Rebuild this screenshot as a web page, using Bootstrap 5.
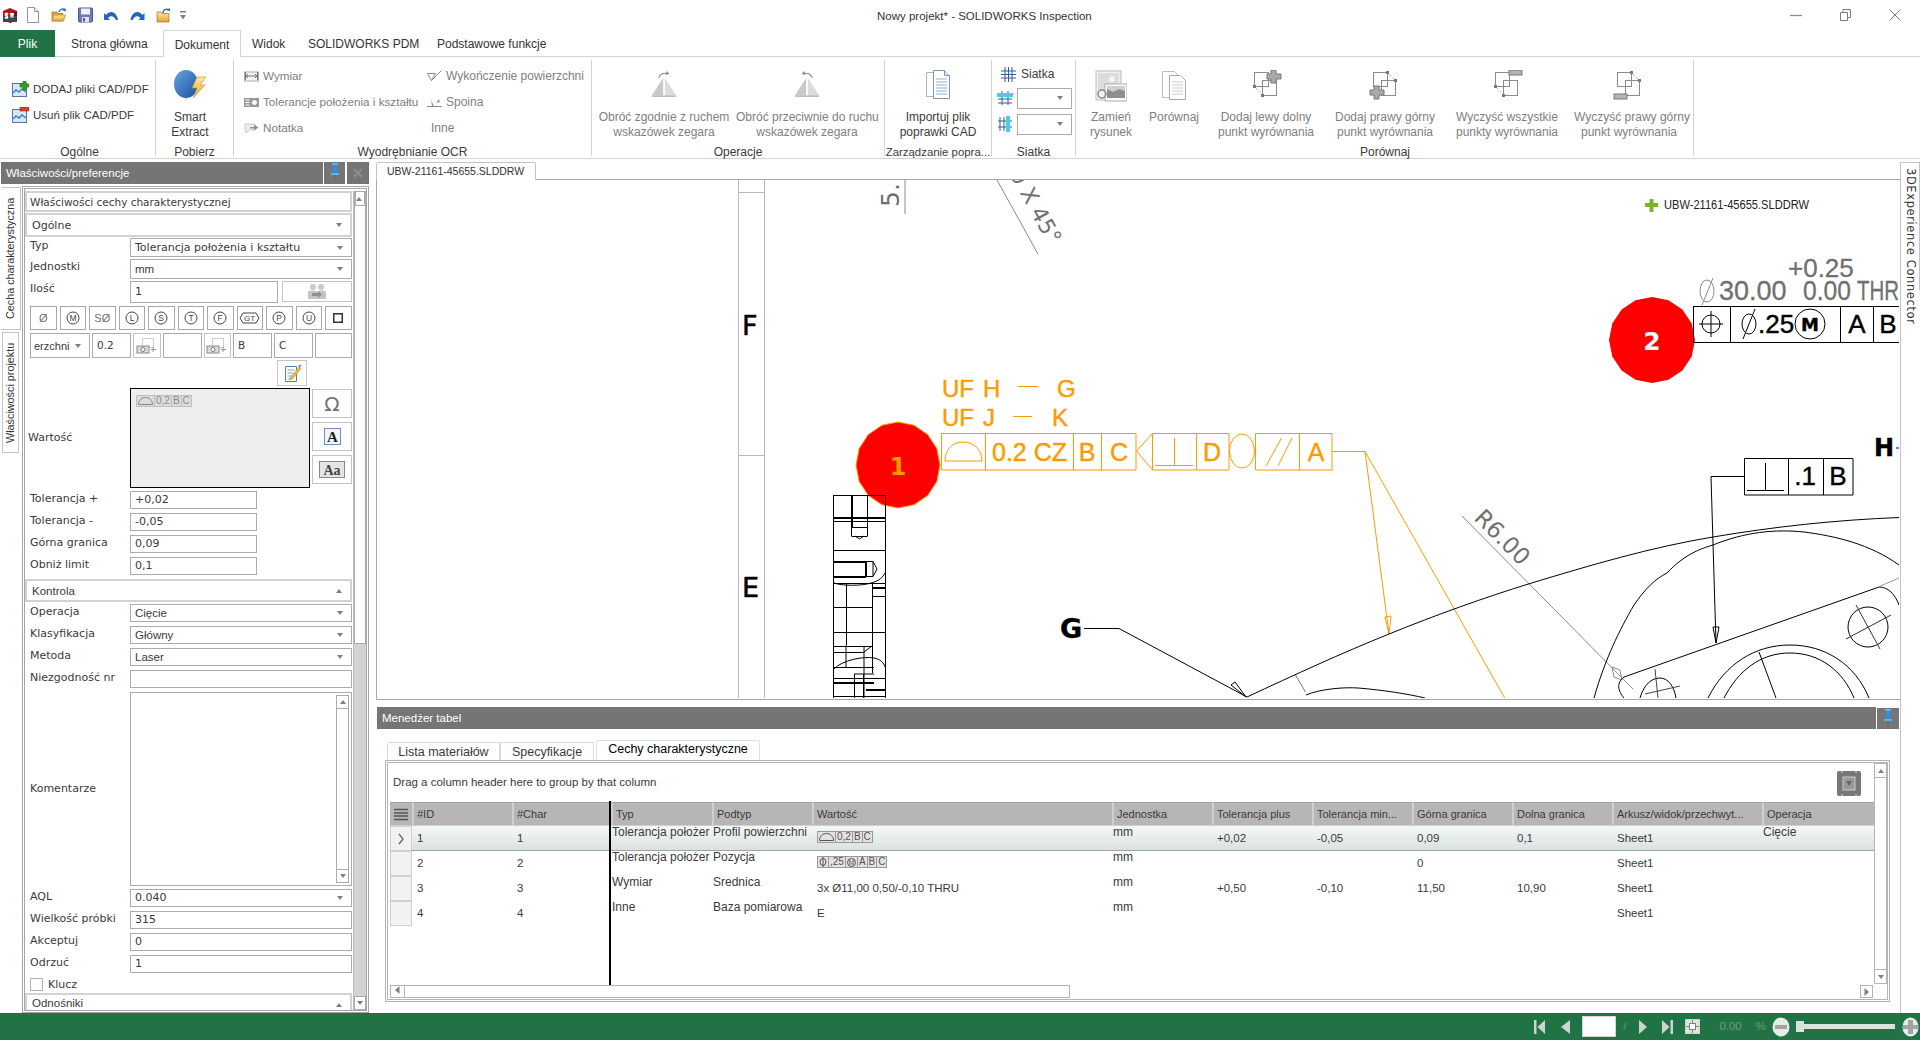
<!DOCTYPE html>
<html lang="pl">
<head>
<meta charset="utf-8">
<title>Nowy projekt* - SOLIDWORKS Inspection</title>
<link href="https://cdn.jsdelivr.net/npm/bootstrap@5.3.0/dist/css/bootstrap.min.css" rel="stylesheet">
<style>
html,body{margin:0;height:1040px;overflow:hidden;background:#fff}
body{font:12px/1.25 "Liberation Sans",Arial,sans-serif;color:#3a3a3a}
svg{display:block;flex:none}
.defs{position:absolute;width:0;height:0}
.appw{width:1920px;height:1040px}
/* title bar */
.ttl{height:30px;flex:none}
.qat{width:200px;flex:none}
.q1{margin-left:2px;width:16px}.q2{margin-left:8px;width:14px}.q3{margin-left:11px;width:16px}.q4{margin-left:11px;width:15px}.q5{margin-left:10px;width:16px}.q6{margin-left:10px;width:17px}.q7{margin-left:10px;width:15px}.q8{margin-left:9px;width:6px}
.ttl-t{margin-left:677px;font-size:11.5px;color:#333;white-space:nowrap;padding-top:2px}
.wb{margin-left:auto;padding-right:19px;gap:38px}
/* ribbon tabs */
.rtabs{height:27px;flex:none;border-bottom:1px solid #d4d4d4;flex-wrap:nowrap}
.rtabs .nav-link{padding:0;border:0;border-radius:0;color:#333;font-size:12px;line-height:28px;height:27px;white-space:nowrap;background:none}
.rtabs .t-plik{width:55px;background:#217346;color:#fff;text-align:center;margin-right:16px}
.rtabs .t-str{width:76px;margin-right:16px}
.rtabs .t-dok{width:78px;border:1px solid #d4d4d4;border-bottom:1px solid #fff;text-align:center;margin-right:11px;background:#fff;color:#333}
.rtabs .t-wid{width:34px;margin-right:22px}
.rtabs .t-pdm{width:101px;margin-right:28px}
/* ribbon */
.rib{height:102px;flex:none;border-bottom:1px solid #d4d4d4;padding:3px 0}
.rg{border-right:1px solid #d4d4d4;height:96px;position:relative;flex:none}
.rg-b{height:84px;flex:none}
.rg-l{height:16px;line-height:16px;text-align:center;white-space:nowrap;overflow:hidden;color:#3a3a3a}
.g1{width:156px}.g2{width:78px}.g3{width:358px}.g4{width:293px}.g5{width:107px}.g6{width:84px}.g7{width:618px;border-right:1px solid #d4d4d4}
.g1 .rg-l{padding-left:4px}
.g5 .rg-l{font-size:11.4px}
.g7 .rg-b{padding-right:8px}
.g7 .rg-l{width:618px}
.rl{height:26px;white-space:nowrap;gap:4px}
.g1 .rg-b{padding:16px 0 0 12px;font-size:11.5px}
.g3 .rg-b{padding:3px 0 0 10px}
.g3c1{width:183px;font-size:11.7px}
.dis{color:#808080}
.lb{height:84px;padding-top:10px;line-height:15px;text-align:center;white-space:nowrap;flex:none}
.lb .ico{height:30px;margin-bottom:10px}
.lb .ico svg{margin:0 auto}
.w144{width:144px}.w142{width:142px}.w107{width:106px}.w78{width:68px}
.w70{width:70px}.w56{width:56px}.w128{width:128px}.w110{width:110px}.w136{width:134px}
.sat{padding:3px 0 0 5px}
.sat1{height:22px;gap:5px}
.sat2{height:26px;gap:4px}
.rcb{width:55px;height:21px;border:1px solid #ababab;position:relative;background:#fff}
.cd{width:0;height:0;border-left:3.5px solid transparent;border-right:3.5px solid transparent;border-top:4px solid #808080;position:absolute;right:8px;top:50%;margin-top:-2px}
.cu{width:0;height:0;border-left:3.5px solid transparent;border-right:3.5px solid transparent;border-bottom:4px solid #808080;position:absolute;right:8px;top:50%;margin-top:-2px}
/* main */
.mainw{height:854px;flex:none}
.lp{width:369px;flex:none;padding-top:3px}
.hdr{background:#757575;color:#fff;height:22px;line-height:23px;font-size:11.5px;padding-left:5px;white-space:nowrap}
.hd-lp{width:322px;margin-left:1px}
.hdbtn{background:#757575;height:22px;width:21px;margin-left:1px;flex:none}
.hdbtn2{margin-left:2px;width:22px}
.lpb{height:829px}
.vts{width:22px;flex:none;padding-top:3px}
.vt{writing-mode:vertical-rl;transform:rotate(180deg);text-align:center;white-space:nowrap;color:#333;font-size:10.8px}
.vt1{height:143px;width:20px;border:1px solid #c4c4c4;border-right:0;margin-left:1px;background:#fff;line-height:18px}
.vt2{height:121px;width:17px;margin:2px 0 0 2px;border:1px solid #c4c4c4;background:#fff;line-height:15px}
.pg{width:347px;height:827px;margin-top:2px;border:3px double #a6a6a6;overflow:hidden;padding:2px 0 0 0}
.pgc{width:327px;flex:none}
.psb{width:14px;margin-left:1px;background:#d3d3d3;position:relative;height:822px;border-left:1px solid #bbb}
.psb-th{height:453px;background:#fff;border:1px solid #ababab;border-top:0}
.psb-up{height:15px;border:1px solid #ababab;background:#fff;position:relative}
.psb .cd,.psb .cu{right:2px}
.psb-dn{position:absolute;bottom:3px;left:0;right:0;height:14px;border:1px solid #ababab;background:#fff}
.pcard{border:2px solid #d2d2d2;background:#fff;font:11px "DejaVu Sans",Verdana,sans-serif;color:#3a3a3a;padding:0 0 0 5px;position:relative;display:flex;align-items:center;white-space:nowrap}
.p-tit{height:21px;padding-left:3px;font-size:10.5px}
.p-ogo{height:24px;margin-top:1px}
.p-kon{height:23px;margin-top:4px;font:11.5px "Liberation Sans",sans-serif}
.p-odn{height:24px;margin-top:2px;font:11.5px "Liberation Sans",sans-serif;padding-bottom:4px}
.pr{display:flex;font:11px "DejaVu Sans",Verdana,sans-serif;color:#3a3a3a}
.pl-t{width:105px;padding-left:5px;flex:none;white-space:nowrap;line-height:16px}
.fld.form-control{border:1px solid #ababab;border-radius:0;padding:0 0 0 4px;font:11px/16px "DejaVu Sans",Verdana,sans-serif;color:#3a3a3a;background:#fff;min-height:0;position:relative;white-space:nowrap;width:222px;flex:none;height:100%;display:flex;align-items:center}
.fld.nar{font-family:"Liberation Sans",sans-serif;font-size:11.5px}
.fld.sh{width:127px}
.r19{height:19px;margin-top:1px}
.r20{height:20px;margin-top:2px}
.r18{height:18px;margin-top:4px}
.r18a{height:18px;margin-top:3px}
.r18b{height:18px;margin-top:2px}
.r22{height:22px;margin-top:2px}
.fld.fil{width:148px}
.btn.sb{border:1px solid #c4c4c4;border-radius:0;background:#fff;padding:0;display:flex;align-items:center;justify-content:center;color:#444;font-size:11px}
.sb-il{width:70px;height:21px;margin-left:4px}
.syms{height:24px;margin-top:3px;padding-left:5px;gap:3px}
.syms .btn.sb{width:26.5px;height:24px;border-color:#a8a8a8}
.fcf{height:25px;margin-top:3px;padding-left:5px;gap:2px}
.fcf .fld.form-control{height:25px;width:39px;padding-left:4px;font-size:10.5px;align-items:flex-start;padding-top:3px}
.fcf .fld.f-sel{width:60px;font:11px "Liberation Sans",sans-serif;align-items:center;padding:0 0 0 3px}
.fcf .fld.f-end{width:37px}
.fcf .btn.sb{width:28px;height:25px}
.edr{height:26px;margin-top:2px;padding-left:252px}
.edr .btn.sb{width:30px;height:26px}
.wrt{height:100px;margin-top:2px}
.wrt .pl-t{padding-left:3px;align-self:center}
.wbox{width:180px;height:100px;border:1px solid #000;background:#eee;padding:6px 5px;flex:none}
.wbtns{padding-left:2px;padding-top:1px}
.wbtns .btn.sb{width:40px;height:29px;margin-bottom:4px}
.kom{height:194px;margin-top:4px}
.kom .pl-t{align-self:center}
.kbox{width:222px;height:194px;border:1px solid #ababab;position:relative}
.ksb{position:absolute;top:2px;right:2px;bottom:2px;width:13px;border:1px solid #ababab}
.ksb i{display:block;height:13px;position:relative}
.ksb i:first-child{border-bottom:1px solid #ababab}
.ksb i:last-child{position:absolute;bottom:0;left:0;right:0;border-top:1px solid #ababab}
.ksb .cd,.ksb .cu{right:2px}
.rkl{height:13px;margin-top:5px;padding-left:5px;gap:5px;align-items:center}
.kcb{width:13px;height:13px;border:1px solid #b4b4b4;background:#fff;flex:none}
.gd{display:inline-flex;height:12px;font:10px/10px "Liberation Sans",sans-serif;color:#555;vertical-align:top}
.gd span{border:1px solid #9a9a9a;border-left-width:0;padding:0 1px;background:#e2e2e2;display:flex;align-items:center;justify-content:center;min-width:9px}
.gd span:first-child{border-left-width:1px}
.gd.dim{color:#8e8e8e}
.gd.dim span{border-color:#c0c0c0;background:#dcdcdc}
/* right */
.rcol{width:1551px;flex:none;padding-top:3px}
.rci{width:1525px;margin-left:7px;border-right:1px solid #c4c4c4;height:851px;flex:none}
.dt.nav-tabs{height:18px;border-bottom:1px solid #a8a8a8;width:1524px;flex-wrap:nowrap}
.dt .nav-link,.dt .nav-link.active{height:19px;width:160px;border:1px solid #c4c4c4;border-bottom:1px solid #fff;border-radius:2px 2px 0 0;font-size:10.5px;line-height:17px;text-align:left;padding:0 0 0 10px;color:#333;margin:0;background:#fff;white-space:nowrap}
.cv{height:520px;width:1524px;border-left:1px solid #a8a8a8;border-bottom:1px solid #a8a8a8;position:relative;overflow:hidden;background:#fff;flex:none}
.cv svg text{font-family:"Liberation Sans",Arial,sans-serif}
.cv svg .dj{font-family:"DejaVu Sans",sans-serif}
.vt3{writing-mode:vertical-rl;font:11.5px "DejaVu Sans",sans-serif;letter-spacing:.6px;color:#333;height:128px;width:19px;border:1px solid #c4c4c4;border-left:0;border-bottom:0;padding-top:5px;white-space:nowrap;line-height:17px;overflow:visible}
.tm-h{margin:7px 0 0 1px;height:23px;flex:none}
.tm-hb{width:1499px}
.tm-pin{width:22px;height:21px;margin:1px 0 0 1px;background:#757575;flex:none}
.tt.nav-tabs{margin:10px 0 0 11px;height:20px;border-bottom:0;flex-wrap:nowrap;align-items:flex-end;position:relative;z-index:1}
.tt .nav-link{padding:0;border:1px solid #d8d8d8;border-bottom:0;border-radius:2px 2px 0 0;margin:0;color:#3a3a3a;font-size:12.5px;height:18px;line-height:18px;text-align:center;background:#fff;white-space:nowrap}
.tt .l1{width:113px}
.tt .l2{width:94px;margin-right:2px}
.tt .l3{width:164px;height:20px;line-height:17px;color:#3a3a3a}
.tpn{margin-left:9px;width:1505px;height:242px;border:3px double #b4b4b4;flex:none}
.tpc{width:1486px;flex:none;height:236px;position:relative}
.drag{height:39px;padding-left:5px;position:relative;flex:none;font-size:11.5px}
.dragi{position:absolute;right:12px;top:7px}
.tg{table-layout:fixed;width:1484px;margin:0 0 0 2px;font-size:11.5px;color:#3a3a3a;border-collapse:separate;border-spacing:0}
.tg .c0{width:22px}.tg .c1{width:100px}.tg .c2{width:99px}.tg .c3{width:101px}.tg .c4{width:100px}.tg .c5{width:300px}.tg .c6{width:100px}.tg .c7{width:100px}.tg .c8{width:100px}.tg .c9{width:100px}.tg .c10{width:100px}.tg .c11{width:150px}.tg .c12{width:112px}
.tgw{height:183px;flex:none}
.tg th,.tg td{padding:0;border:0;box-shadow:none;overflow:hidden;white-space:nowrap;background:none;font-weight:400;color:#3a3a3a}
.tg thead th{height:24px;background:#b6b6b6;border-top:1px solid #a0a0a0;border-left:2px solid #cfcfcf;border-bottom:1px solid #cfcfcf;padding:2px 0 0 3px;vertical-align:middle;font-size:11px}
.tg thead th:first-child{border-left:0;text-align:center;padding:0}
.tg tbody td{height:25px;vertical-align:middle;padding-left:5px}
.tg tbody td.tp{vertical-align:top;padding:0 0 0 1px;line-height:13px;font-size:12px}
.tg tbody td.rh{background:#f2f2f2;border:1px solid #d0d0d0;padding:0;text-align:center;color:#555}
.tg tbody tr.sel td{background:linear-gradient(#f4f9f7,#dae1df);border-bottom:1px solid #9aa5a1}
.tg tbody tr.sel td.rh{background:#f2f2f2;border:1px solid #d0d0d0}
.hsb{height:13px;flex:none;position:relative;margin-left:2px}
.hsb-t{width:680px;height:13px;border:1px solid #b4b4b4;position:relative}
.hsb-a{width:14px;height:11px;border-right:1px solid #b4b4b4}
.hsb-r{position:absolute;right:1px;top:0;width:13px;height:13px;border:1px solid #b4b4b4}
.vsb{width:13px;height:221px;border:1px solid #b4b4b4;position:relative;flex:none}
.vsb i{display:block;height:14px;position:relative}
.vsb i:first-child{border-bottom:1px solid #b4b4b4}
.vsb i:last-child{position:absolute;left:0;right:0;bottom:0;border-top:1px solid #b4b4b4}
.vsb .cd,.vsb .cu{right:2px;border-left-width:3px;border-right-width:3px}
.fz{position:absolute;left:221px;top:38px;width:2px;height:184px;background:#000}
/* status */
.stb{height:27px;flex:none;background:#217346;color:#9db5a8;justify-content:flex-end;padding-right:1px}
.stb .m1{margin-left:16px}.stb .m2{margin-left:12px}.stb .m3{margin-left:7px}.stb .m4{margin-left:13px}.stb .m5{margin-left:15px}.stb .m6{margin-left:12px}.stb .m7{margin-left:19px}.stb .m8{margin-left:14px}.stb .m9{margin-left:6px}.stb .m10{margin-left:7px}
.stin{width:34px;height:21px;background:#fff;border:1px solid #cfd8d3}
.st-txt{font-size:11.5px;color:#6f9783}
.zs{width:99px;height:5px;background:#d9e2dd;position:relative;margin-left:6px}
.zs i{position:absolute;left:0;top:-3px;width:8px;height:11px;background:#d9e2dd}
</style>
</head>
<body>
<svg class="defs" aria-hidden="true">
<defs>
<linearGradient id="gb" x1="0" y1="0" x2="1" y2="1"><stop offset="0" stop-color="#6aa5e2"/><stop offset="1" stop-color="#174f9c"/></linearGradient>
<linearGradient id="gy" x1="0" y1="0" x2="0" y2="1"><stop offset="0" stop-color="#ffe89a"/><stop offset="1" stop-color="#e0a23c"/></linearGradient>
<symbol id="pin" viewBox="0 0 14 20"><rect x="4" y="1" width="6" height="2" fill="#5cb4f0"/><rect x="5" y="3" width="4" height="8" fill="#2f8fe0"/><rect x="3" y="11" width="8" height="2" fill="#5cb4f0"/><rect x="6.500" y="13" width="1" height="6" fill="#5a6b78"/></symbol>
<symbol id="pic" viewBox="0 0 16 14"><rect x=".5" y=".5" width="14" height="13" fill="#d6e8f8" stroke="#56789e"/><path d="M1 10l3-3 3 2 3-3 4 3" fill="none" stroke="#2e86d0" stroke-width="1.400"/></symbol>
<symbol id="al" viewBox="0 0 32 32"><g fill="none" stroke="#8c8c8c"><rect x="4.500" y="2.500" width="14" height="14"/><rect x="12.500" y="10.500" width="14" height="15"/></g></symbol>
<symbol id="cam" viewBox="0 0 22 18"><rect x="6.500" y="1.500" width="11" height="9" fill="none" stroke="#999" stroke-dasharray="1 1"/><rect x="1" y="9" width="12" height="7" fill="#ddd" stroke="#888"/><circle cx="7" cy="12.500" r="2" fill="#fff" stroke="#777"/><path d="M17 10v5M15 12.500h5" stroke="#999"/></symbol>
<symbol id="tri" viewBox="0 0 32 26"><path d="M15 3v20H2z" fill="#c9c9c9"/><path d="M17 3v20h13z" fill="#dcdcdc"/><path d="M2 23h28v1.500H2z" fill="#aaa"/></symbol>
<symbol id="doc2" viewBox="0 0 30 32"><path d="M3.500 1.500h12l4 4v22h-16z" fill="#fff" stroke="#bdbdbd"/><path d="M10.500 5.500h11l5 5v19h-16z" fill="#fff" stroke="#a8a8a8"/><path d="M13 12h11M13 15h11M13 18h11M13 21h11M13 24h11" stroke="#cfcfcf"/></symbol>
</defs>
</svg>
<div class="appw d-flex flex-column">

<div class="ttl d-flex align-items-center">
 <div class="qat d-flex align-items-center">
  <svg class="q1" height="16" viewBox="0 0 16 16"><path d="M1 4l7-3 7 3v9l-7 3-7-3z" fill="#b01818"/><path d="M8 7l7-3v9l-7 3z" fill="#6e0d0d"/><rect x="1" y="9" width="14" height="6" fill="#444"/><path d="M3 6h3v1.500H4.500v1H6v3H3v-1.500h1.500v-1H3zM8 6l1 5 1-3 1 3 1-5" fill="#fff" stroke="#fff" stroke-width=".4"/></svg>
  <svg class="q2" height="16" viewBox="0 0 14 16"><path d="M1.500.5h7l4 4v11h-11z" fill="#fff" stroke="#8a93b8"/><path d="M8.500.5v4h4" fill="#e4e9f6" stroke="#8a93b8"/></svg>
  <svg class="q3" height="16" viewBox="0 0 16 16"><path d="M1 5h5l1 1.500h5V14H1z" fill="#d9a73e" stroke="#9a7428" stroke-width=".7"/><path d="M2.500 8h12l-2 6H1z" fill="url(#gy)" stroke="#b08a33" stroke-width=".7"/><path d="M8 5c1-3 4-4 6-2" fill="none" stroke="#2d6fc0" stroke-width="1.500"/><path d="M15.500 4.500L14 1l-2.500 2.500z" fill="#2d6fc0"/></svg>
  <svg class="q4" height="16" viewBox="0 0 15 16"><rect x=".5" y="1" width="14" height="14" rx="1" fill="#6e7ab0" stroke="#4e5a90"/><rect x="3" y="1.500" width="9" height="6" fill="#eef0f8"/><rect x="4" y="10" width="7" height="5" fill="#e6e6e6"/><rect x="5" y="11" width="2" height="3.500" fill="#4e5a90"/></svg>
  <svg class="q5" height="11" viewBox="0 0 16 11"><path d="M1 3v7h6L5 8c3-3 6-2 8 2h2C14 3 8-1 3 5z" fill="#2067b8"/></svg>
  <svg class="q6" height="11" viewBox="0 0 16 11"><path d="M15 3v7H9l2-2C8 5 5 6 3 10H1C2 3 8-1 13 5z" fill="#2067b8"/></svg>
  <svg class="q7" height="16" viewBox="0 0 15 16"><path d="M1 5h4l1 1.500h7V15H1z" fill="url(#gy)" stroke="#9a7428" stroke-width=".7"/><path d="M7 6c0-3 3-5 6-3" fill="none" stroke="#2d6fc0" stroke-width="1.500"/><path d="M14.500 4.500L13.500 1l-3 2z" fill="#2d6fc0"/></svg>
  <svg class="q8" height="9" viewBox="0 0 6 9"><path d="M0 0h6v1.500H0z" fill="#808080"/><path d="M0 4h6L3 8.500z" fill="#808080"/></svg>
 </div>
 <div class="ttl-t">Nowy projekt* - SOLIDWORKS Inspection</div>
 <div class="wb d-flex align-items-center">
  <svg width="12" height="12" viewBox="0 0 12 12"><path d="M0 6.500h12" stroke="#8a8a8a" stroke-width="1.300"/></svg>
  <svg width="11" height="12" viewBox="0 0 11 12"><path d="M.5 3.500h7v8h-7zM3 3.500V.5h7.500v8H7.500" fill="none" stroke="#7a7a7a"/></svg>
  <svg width="12" height="12" viewBox="0 0 12 12"><path d="M.5.500l11 11M11.500.500l-11 11" stroke="#7a7a7a"/></svg>
 </div>
</div>

<ul class="nav rtabs">
 <li class="nav-item"><a class="nav-link t-plik" href="#">Plik</a></li>
 <li class="nav-item"><a class="nav-link t-str" href="#">Strona główna</a></li>
 <li class="nav-item"><a class="nav-link t-dok active" href="#">Dokument</a></li>
 <li class="nav-item"><a class="nav-link t-wid" href="#">Widok</a></li>
 <li class="nav-item"><a class="nav-link t-pdm" href="#">SOLIDWORKS PDM</a></li>
 <li class="nav-item"><a class="nav-link" href="#">Podstawowe funkcje</a></li>
</ul>

<div class="rib d-flex">
 <div class="rg g1">
  <div class="rg-b">
   <div class="rl d-flex align-items-center"><svg width="17" height="16" viewBox="0 0 17 16"><use href="#pic" y="2" width="16" height="14"/><path d="M11 0h3v3h3v3h-3v3h-3V6H8V3h3z" fill="#33a02c" stroke="#1d6e1a" stroke-width=".6"/></svg><span>DODAJ pliki CAD/PDF</span></div>
   <div class="rl d-flex align-items-center"><svg width="17" height="16" viewBox="0 0 17 16"><use href="#pic" y="2" width="16" height="14"/><rect x="8" y="0" width="9" height="4" fill="#e33a2c" stroke="#a3231a" stroke-width=".6"/></svg><span>Usuń plik CAD/PDF</span></div>
  </div>
  <div class="rg-l">Ogólne</div>
 </div>
 <div class="rg g2">
  <div class="rg-b"><div class="lb w78">
   <div class="ico"><svg width="33" height="30" viewBox="0 0 33 30"><ellipse cx="12" cy="14" rx="12" ry="14" fill="url(#gb)"/><path d="M12 28v2" stroke="#aaa"/><path d="M23 7h9l-6 8h5L19 28l4-10h-5z" fill="url(#gy)" stroke="#c88a20" stroke-width=".6"/></svg></div>
   <div>Smart<br>Extract</div></div></div>
  <div class="rg-l">Pobierz</div>
 </div>
 <div class="rg g3">
  <div class="rg-b d-flex">
   <div class="g3c1 dis">
    <div class="rl d-flex align-items-center"><svg width="15" height="11" viewBox="0 0 15 11"><rect x=".5" y="1" width="14" height="9" fill="#f4f4f4" stroke="#aaa"/><path d="M1.500 1v8M13.500 1v8M2 5h11M2 5l2-2M2 5l2 2M13 5l-2-2M13 5l-2 2" stroke="#777" fill="none"/></svg><span>Wymiar</span></div>
    <div class="rl d-flex align-items-center"><svg width="15" height="9" viewBox="0 0 15 9"><rect width="15" height="9" fill="#9a9a9a"/><path d="M1.500 2h4M1.500 4.500h4M1.500 7h4" stroke="#fff"/><circle cx="10.500" cy="4.500" r="2" fill="#fff" stroke="#fff"/></svg><span>Tolerancje położenia i kształtu</span></div>
    <div class="rl d-flex align-items-center"><svg width="15" height="13" viewBox="0 0 15 13"><path d="M1 2h10v6H5l-3 3V8H1z" fill="#eee" stroke="#ccc"/><path d="M6 5h4V2.500L14.500 5.500 10 8.500V6.500H6z" fill="#909090"/></svg><span>Notatka</span></div>
   </div>
   <div class="dis">
    <div class="rl d-flex align-items-center"><svg width="15" height="12" viewBox="0 0 15 12"><path d="M.5 3.500h8L4.500 10.500z M4.500 10.500L14.500.5" fill="none" stroke="#8a8a8a"/></svg><span>Wykończenie powierzchni</span></div>
    <div class="rl d-flex align-items-center"><svg width="15" height="11" viewBox="0 0 15 11"><path d="M0 9.500h15" stroke="#888"/><path d="M5 9l-1-6 3 6zM9 6l3-4 1 3z" fill="#999"/></svg><span>Spoina</span></div>
    <div class="rl d-flex align-items-center"><span class="ms-1">Inne</span></div>
   </div>
  </div>
  <div class="rg-l">Wyodrębnianie OCR</div>
 </div>
 <div class="rg g4">
  <div class="rg-b d-flex">
   <div class="lb w144 dis"><div class="ico"><svg width="32" height="28" viewBox="0 0 32 32"><use href="#tri" y="6" width="32" height="26"/><path d="M10 9c1-4 5-6 9-5" fill="none" stroke="#888" stroke-width="1.200"/><path d="M19 1l3 3-4 2z" fill="#888"/></svg></div><div>Obróć zgodnie z ruchem<br>wskazówek zegara</div></div>
   <div class="lb w142 dis"><div class="ico"><svg width="32" height="28" viewBox="0 0 32 32"><use href="#tri" y="6" width="32" height="26"/><path d="M22 9c-1-4-5-6-9-5" fill="none" stroke="#888" stroke-width="1.200"/><path d="M13 1l-3 3 4 2z" fill="#888"/></svg></div><div>Obróć przeciwnie do ruchu<br>wskazówek zegara</div></div>
  </div>
  <div class="rg-l">Operacje</div>
 </div>
 <div class="rg g5">
  <div class="rg-b"><div class="lb w107"><div class="ico"><svg width="28" height="31" viewBox="0 0 28 31"><path d="M2.500 2.500h11l4 4v20h-15z" fill="#fff" stroke="#a9b5c6"/><path d="M9.500 .5h11l5 5v23h-16z" fill="#fff" stroke="#7f94b1"/><path d="M20.500 .5v5h5" fill="#dfe9f6" stroke="#7f94b1"/><path d="M12 9h11M12 12h11M12 15h11M12 18h11M12 21h11M12 24h11" stroke="#8eb0d8"/></svg></div><div>Importuj plik<br>poprawki CAD</div></div></div>
  <div class="rg-l">Zarządzanie popra...</div>
 </div>
 <div class="rg g6">
  <div class="rg-b sat">
   <div class="sat1 d-flex align-items-center ps-1"><svg width="15" height="15" viewBox="0 0 15 15"><path d="M4 0v15M7.500 0v15M11 0v15M0 4h15M0 7.500h15M0 11h15" stroke="#2f5f94"/></svg><span>Siatka</span></div>
   <div class="sat2 d-flex align-items-center"><svg width="16" height="16" viewBox="0 0 16 16"><path d="M5 1v14M11 1v14M1 9h14M1 13h14" stroke="#2f5f94"/><rect y="3" width="16" height="4" fill="#45d0e8"/></svg><div class="rcb"><span class="cd"></span></div></div>
   <div class="sat2 d-flex align-items-center"><svg width="16" height="16" viewBox="0 0 16 16"><path d="M3 1v14M7 1v14M1 5h14M1 11h14" stroke="#2f5f94"/><rect x="9" width="4" height="16" fill="#45d0e8"/></svg><div class="rcb"><span class="cd"></span></div></div>
  </div>
  <div class="rg-l">Siatka</div>
 </div>
 <div class="rg g7">
  <div class="rg-b d-flex">
   <div class="lb w70 dis"><div class="ico"><svg width="32" height="32" viewBox="0 0 32 32"><rect x="1" y="1" width="25" height="29" fill="#f0f0f0" stroke="#bbb"/><rect x="3" y="3" width="21" height="17" fill="#dcdcdc"/><circle cx="17" cy="9" r="3" fill="#f4f4f4"/><rect x="10" y="14" width="22" height="17" fill="#fff" stroke="#aaa"/><rect x="12" y="16" width="18" height="12" fill="#8f8f8f"/><path d="M12 16h18v5l-6-2-6 3-6-3z" fill="#cfcfcf"/><circle cx="7" cy="24" r="4" fill="none" stroke="#888" stroke-width="1.500"/></svg></div><div>Zamień<br>rysunek</div></div>
   <div class="lb w56 dis"><div class="ico"><svg width="30" height="32" viewBox="0 0 30 32"><use href="#doc2" width="30" height="32"/></svg></div><div>Porównaj</div></div>
   <div class="lb w128 dis"><div class="ico"><svg width="32" height="30" viewBox="0 0 32 30"><use href="#al" width="32" height="32"/><path d="M4.500 16.500l8 9" stroke="#999" stroke-dasharray="1 1"/><rect x="3" y="15" width="3" height="3" fill="#777"/><rect x="11" y="24" width="3" height="3" fill="#777"/><path d="M21 0h5v4h5v5h-5v4h-5V9h-4V4h4z" fill="#aaa" stroke="#777"/></svg></div><div>Dodaj lewy dolny<br>punkt wyrównania</div></div>
   <div class="lb w110 dis"><div class="ico"><svg width="32" height="30" viewBox="0 0 32 30"><use href="#al" width="32" height="32"/><path d="M18.500 2.500l8 8" stroke="#999" stroke-dasharray="1 1"/><rect x="17" y="1" width="3" height="3" fill="#777"/><rect x="25" y="9" width="3" height="3" fill="#777"/><path d="M5 16h5v4h5v5h-5v4H5v-4H1v-5h4z" fill="#aaa" stroke="#777"/></svg></div><div>Dodaj prawy górny<br>punkt wyrównania</div></div>
   <div class="lb w136 dis"><div class="ico"><svg width="32" height="30" viewBox="0 0 32 30"><use href="#al" width="32" height="32"/><path d="M4.500 16.500l8 9" stroke="#999" stroke-dasharray="1 1"/><rect x="3" y="15" width="3" height="3" fill="#777"/><rect x="11" y="24" width="3" height="3" fill="#777"/><rect x="18" y="0" width="13" height="5" fill="#b4b4b4" stroke="#777"/></svg></div><div>Wyczyść wszystkie<br>punkty wyrównania</div></div>
   <div class="lb w110 dis"><div class="ico"><svg width="32" height="30" viewBox="0 0 32 30"><use href="#al" width="32" height="32"/><path d="M18.500 2.500l8 8" stroke="#999" stroke-dasharray="1 1"/><rect x="17" y="1" width="3" height="3" fill="#777"/><rect x="25" y="9" width="3" height="3" fill="#777"/><rect x="1" y="24" width="13" height="5" fill="#b4b4b4" stroke="#777"/></svg></div><div>Wyczyść prawy górny<br>punkt wyrównania</div></div>
  </div>
  <div class="rg-l">Porównaj</div>
 </div>
</div>

<div class="mainw d-flex">
 <!-- left panel -->
 <div class="lp d-flex flex-column">
  <div class="d-flex">
   <div class="hdr hd-lp">Właściwości/preferencje</div>
   <div class="hdbtn d-flex justify-content-center"><svg width="14" height="20"><use href="#pin"/></svg></div>
   <div class="hdbtn hdbtn2 d-flex justify-content-center align-items-center"><svg width="10" height="10" viewBox="0 0 10 10"><path d="M1 1l8 8M9 1l-8 8" stroke="#8f8f8f" stroke-width="2"/></svg></div>
  </div>
  <div class="lpb d-flex">
   <div class="vts">
    <div class="vt vt1">Cecha charakterystyczna</div>
    <div class="vt vt2">Właściwości projektu</div>
   </div>
   <div class="pg d-flex">
    <div class="pgc">
     <div class="pcard p-tit">Właściwości cechy charakterystycznej</div>
     <div class="pcard p-ogo">Ogólne<span class="cd"></span></div>
     <div class="pr r19"><div class="pl-t">Typ</div><div class="fld form-control">Tolerancja położenia i kształtu<span class="cd"></span></div></div>
     <div class="pr r20"><div class="pl-t">Jednostki</div><div class="fld form-control nar">mm<span class="cd"></span></div></div>
     <div class="pr r22"><div class="pl-t">Ilość</div><div class="fld fil form-control">1</div><button type="button" class="btn sb sb-il"><svg width="20" height="15" viewBox="0 0 20 15"><circle cx="6" cy="3" r="3" fill="#c9c9c9"/><circle cx="14" cy="3" r="3" fill="#c9c9c9"/><path d="M1 15V8c0-2 9-2 9 0v7zM10 15V8c0-2 9-2 9 0v7z" fill="#c4c4c4"/><path d="M5 9h6V7l4 3.500-4 3.500v-2H5z" fill="#8f8f8f"/></svg></button></div>
     <div class="syms d-flex">
      <button type="button" class="btn sb"><span class="text-secondary">Ø</span></button>
      <button type="button" class="btn sb"><svg width="14" height="14" viewBox="0 0 14 14"><circle cx="7" cy="7" r="6" fill="none" stroke="#444"/><text x="7" y="10" font-size="8.500" text-anchor="middle" fill="#444" font-family="Liberation Sans">M</text></svg></button>
      <button type="button" class="btn sb"><span class="text-secondary">SØ</span></button>
      <button type="button" class="btn sb"><svg width="14" height="14" viewBox="0 0 14 14"><circle cx="7" cy="7" r="6" fill="none" stroke="#444"/><text x="7" y="10" font-size="8.500" text-anchor="middle" fill="#444" font-family="Liberation Sans">L</text></svg></button>
      <button type="button" class="btn sb"><svg width="14" height="14" viewBox="0 0 14 14"><circle cx="7" cy="7" r="6" fill="none" stroke="#444"/><text x="7" y="10" font-size="8.500" text-anchor="middle" fill="#444" font-family="Liberation Sans">S</text></svg></button>
      <button type="button" class="btn sb"><svg width="14" height="14" viewBox="0 0 14 14"><circle cx="7" cy="7" r="6" fill="none" stroke="#444"/><text x="7" y="10" font-size="8.500" text-anchor="middle" fill="#444" font-family="Liberation Sans">T</text></svg></button>
      <button type="button" class="btn sb"><svg width="14" height="14" viewBox="0 0 14 14"><circle cx="7" cy="7" r="6" fill="none" stroke="#444"/><text x="7" y="10" font-size="8.500" text-anchor="middle" fill="#444" font-family="Liberation Sans">F</text></svg></button>
      <button type="button" class="btn sb"><svg width="21" height="12" viewBox="0 0 21 12"><path d="M1 6l3-5h13l3 5-3 5H4z" fill="none" stroke="#444"/><text x="10.500" y="9" font-size="8" text-anchor="middle" fill="#444" font-family="Liberation Sans">GT</text></svg></button>
      <button type="button" class="btn sb"><svg width="14" height="14" viewBox="0 0 14 14"><circle cx="7" cy="7" r="6" fill="none" stroke="#444"/><text x="7" y="10" font-size="8.500" text-anchor="middle" fill="#444" font-family="Liberation Sans">P</text></svg></button>
      <button type="button" class="btn sb"><svg width="14" height="14" viewBox="0 0 14 14"><circle cx="7" cy="7" r="6" fill="none" stroke="#444"/><text x="7" y="10" font-size="8.500" text-anchor="middle" fill="#444" font-family="Liberation Sans">U</text></svg></button>
      <button type="button" class="btn sb"><svg width="10" height="10" viewBox="0 0 10 10"><rect x=".75" y=".75" width="8.500" height="8.500" fill="none" stroke="#333" stroke-width="1.500"/></svg></button>
     </div>
     <div class="fcf d-flex">
      <div class="fld f-sel form-control">erzchni<span class="cd"></span></div>
      <div class="fld form-control">0.2</div>
      <button type="button" class="btn sb"><svg width="22" height="18"><use href="#cam"/></svg></button>
      <div class="fld form-control"></div>
      <button type="button" class="btn sb"><svg width="22" height="18"><use href="#cam"/></svg></button>
      <div class="fld form-control">B</div>
      <div class="fld form-control">C</div>
      <div class="fld f-end form-control"></div>
     </div>
     <div class="edr d-flex"><button type="button" class="btn sb"><svg width="17" height="18" viewBox="0 0 17 18"><path d="M1.500 2.500h11v15h-11z" fill="#fff" stroke="#5b7fa8"/><path d="M3.500 6h7M3.500 9h6M3.500 12h5M3.500 15h4" stroke="#7f9fc4"/><path d="M7 13l8-10 2 1.500-8 10-3 1z" fill="#f5b942" stroke="#b5761c" stroke-width=".5"/><path d="M14.500 2l1.500-1.500 1 1L15.800 3.500z" fill="#e23a2c"/></svg></button></div>
     <div class="pr wrt">
      <div class="pl-t">Wartość</div>
      <div class="wbox"><span class="gd dim"><span><svg width="15" height="8" viewBox="0 0 15 8"><path d="M.5 7.500C.5 3 4 .5 7.500 .5s7 2.500 7 7z" fill="none" stroke="#888"/></svg></span><span>0,2</span><span>B</span><span>C</span></span></div>
      <div class="wbtns">
       <button type="button" class="btn sb"><span class="fs-5 text-secondary">Ω</span></button>
       <button type="button" class="btn sb"><svg width="17" height="17" viewBox="0 0 17 17"><rect x=".5" y=".5" width="16" height="16" fill="#f3f7fb" stroke="#6c8ebf"/><text x="8.500" y="14" font-family="Liberation Serif" font-weight="700" font-size="15" text-anchor="middle" fill="#222">A</text></svg></button>
       <button type="button" class="btn sb"><svg width="26" height="17" viewBox="0 0 26 17"><rect x=".5" y=".5" width="25" height="16" fill="#e4e4e4" stroke="#888"/><text x="13" y="14" font-family="Liberation Serif" font-weight="700" font-size="14" text-anchor="middle" fill="#444">Aa</text></svg></button>
      </div>
     </div>
     <div class="pr r18a"><div class="pl-t">Tolerancja +</div><div class="fld sh form-control">+0,02</div></div>
     <div class="pr r18"><div class="pl-t">Tolerancja -</div><div class="fld sh form-control">-0,05</div></div>
     <div class="pr r18"><div class="pl-t">Górna granica</div><div class="fld sh form-control">0,09</div></div>
     <div class="pr r18"><div class="pl-t">Obniż limit</div><div class="fld sh form-control">0,1</div></div>
     <div class="pcard p-kon">Kontrola<span class="cu"></span></div>
     <div class="pr r18b"><div class="pl-t">Operacja</div><div class="fld nar form-control">Cięcie<span class="cd"></span></div></div>
     <div class="pr r18"><div class="pl-t">Klasyfikacja</div><div class="fld nar form-control">Główny<span class="cd"></span></div></div>
     <div class="pr r18"><div class="pl-t">Metoda</div><div class="fld nar form-control">Laser<span class="cd"></span></div></div>
     <div class="pr r18"><div class="pl-t">Niezgodność nr</div><div class="fld form-control"></div></div>
     <div class="pr kom"><div class="pl-t">Komentarze</div><div class="kbox"><div class="ksb"><i><span class="cu"></span></i><i><span class="cd"></span></i></div></div></div>
     <div class="pr r18a"><div class="pl-t">AQL</div><div class="fld form-control">0.040<span class="cd"></span></div></div>
     <div class="pr r18"><div class="pl-t">Wielkość próbki</div><div class="fld form-control">315</div></div>
     <div class="pr r18"><div class="pl-t">Akceptuj</div><div class="fld form-control">0</div></div>
     <div class="pr r18"><div class="pl-t">Odrzuć</div><div class="fld form-control">1</div></div>
     <div class="pr rkl"><div class="kcb"></div><span>Klucz</span></div>
     <div class="pcard p-odn">Odnośniki<span class="cu"></span></div>
    </div>
    <div class="psb"><div class="psb-th"><div class="psb-up"><span class="cu"></span></div></div><div class="psb-dn"><span class="cd"></span></div></div>
   </div>
  </div>
 </div>

 <!-- right column -->
 <div class="rcol d-flex">
  <div class="rci d-flex flex-column">
   <ul class="nav nav-tabs dt"><li class="nav-item"><a class="nav-link active" href="#">UBW-21161-45655.SLDDRW</a></li></ul>
   <div class="cv">
    <svg width="1523" height="519" viewBox="377 181 1523 519" fill="none">
     <defs><clipPath id="dcl"><rect x="377" y="181" width="1522" height="518"/></clipPath></defs>
     <g clip-path="url(#dcl)">
      <!-- zone strip -->
      <g stroke="#b8b8b8"><path d="M738.500 181v518M764.500 181v518M738 193.500h27M738 456.500h27"/></g>
      <text class="dj" x="742" y="336" font-size="27" fill="#000" stroke="#000" stroke-width=".5">F</text>
      <text class="dj" x="742" y="598" font-size="27" fill="#000" stroke="#000" stroke-width=".5">E</text>
      <!-- dims -->
      <text class="dj" transform="translate(899,208) rotate(-90)" font-size="25" fill="#707070">5.</text>
      <path d="M905 181v34" stroke="#8a8a8a"/>
      <path d="M997 181l41 74" stroke="#8a8a8a"/>
      <text class="dj" transform="translate(1049,247) rotate(61)" font-size="22" fill="#707070" text-anchor="end">0 X 45°</text>
      <path d="M1462 517l171 173" stroke="#8a8a8a"/>
      <path d="M1612 668l8 3 2 10-8-3z" stroke="#8a8a8a"/>
      <text class="dj" transform="translate(1473,520) rotate(45)" font-size="23" fill="#707070">R6.00</text>
      <text x="1788" y="278" font-size="26" fill="#707070" stroke="#707070" stroke-width=".3">+0.25</text>
      <text x="1719" y="301" font-size="27" fill="#707070" stroke="#707070" stroke-width=".3">30.00</text>
      <text x="1803" y="301" font-size="27" fill="#707070" stroke="#707070" stroke-width=".3" textLength="48" lengthAdjust="spacingAndGlyphs">0.00</text>
      <text x="1857" y="301" font-size="27" fill="#707070" stroke="#707070" stroke-width=".3" textLength="42" lengthAdjust="spacingAndGlyphs">THR</text>
      <g stroke="#8a8a8a"><ellipse cx="1707" cy="292" rx="7" ry="11"/><path d="M1702 306l11-27"/></g>
      <!-- legend -->
      <path d="M1649.500 200h4v4h4.500v4h-4.500v5h-4v-5h-4.500v-4h4.500z" fill="#7ab32c"/>
      <text x="1664" y="210" font-size="12" fill="#222" textLength="145" lengthAdjust="spacingAndGlyphs">UBW-21161-45655.SLDDRW</text>
      <!-- balloons -->
      <polygon points="940,466 936.8,482.5 927.7,496.4 914.1,505.7 898,509 881.9,505.7 868.3,496.4 859.2,482.5 856,466 859.2,449.5 868.3,435.6 881.9,426.3 898,423 914.1,426.3 927.7,435.6 936.8,449.5" fill="#f00" stroke="#ff9900"/>
      <text class="dj" x="898" y="476" font-size="24" font-weight="700" fill="#ff9900" text-anchor="middle">1</text>
      <polygon points="1695,341 1691.7,357.5 1682.4,371.4 1668.5,380.7 1652,384 1635.5,380.7 1621.6,371.4 1612.3,357.5 1609,341 1612.3,324.5 1621.6,310.6 1635.5,301.3 1652,298 1668.5,301.3 1682.4,310.6 1691.7,324.5" fill="#f00"/>
      <text class="dj" x="1652" y="351" font-size="25" font-weight="700" fill="#fff" text-anchor="middle">2</text>
      <!-- part section -->
      <g stroke="#000">
       <rect x="833.500" y="496.500" width="52" height="210"/>
       <path d="M834 518.500h52M834 519.500h52M834 522.500h52M834 551.500h52M834 562.500h32M834 563.500h32M834 577.500h32M834 578.500h32M834 584.500h52M873 588.500h13M873 589.500h13M873 597.500h13M834 608.500h39M834 633.500h52M834 647.500h38M834 653.500h30M834 668.500h40M834 679.500h52M834 683.500h40M834 684.500h40M866 690.500h20M866 691.500h20M834 697.500h52"/>
       <path d="M851.500 496v32M852.500 496v32M867.500 496v37M851.500 528.500h16M851.500 528v9M867.500 533v4M851.500 537.500h16M855 537l4.500 3 4.500-3"/>
       <path d="M865.500 562v16M866.500 562v16M873 562.500v15M866 562.500h7M866 577.500h7M873 562.500l4 7.500-4 7.500"/>
       <path d="M846.500 584v62M872.500 584v90M846 646v22M864 647v52M863.500 675v24M854 675h20M854.500 675v24M872 647l-8 6"/>
       <path d="M834 584c8 3 28 3 37 0c8-2 12-6 14-10" />
       <path d="M834 670c8-9 30-13 40-11c6 1 10 5 11 9" />
      </g>
      <!-- orange FCF -->
      <g fill="#ff9900" font-size="24" stroke="#ff9900" stroke-width=".4">
       <text x="942" y="398">UF</text><text x="983" y="398">H</text><text x="1057" y="398">G</text>
       <text x="942" y="427">UF</text><text x="983" y="427">J</text><text x="1052" y="427">K</text>
       <text x="992" y="462" font-size="25">0.2 CZ</text>
       <text x="1087" y="462" font-size="25" text-anchor="middle">B</text>
       <text x="1119" y="462" font-size="25" text-anchor="middle">C</text>
       <text x="1212" y="462" font-size="25" text-anchor="middle">D</text>
       <text x="1316" y="462" font-size="25" text-anchor="middle">A</text>
      </g>
      <g stroke="#ff9900">
       <path d="M1018 387.500h20M1013 417.500h19"/>
       <path d="M941.500 434.500h194.500v36.500h-194.500zM985.500 434v37M1073.500 434v37M1101.500 434v37"/>
       <path d="M1152.500 434.500l-16 17.500 16 19"/>
       <path d="M1152.500 434.500h76.500v36.500h-76.500zM1196.500 434v37"/>
       <path d="M1255.500 434.500h76.500v36.500h-76.500zM1299.500 434v37"/>
       <ellipse cx="1242" cy="452" rx="12.500" ry="17"/>
       <path d="M945 462c0-13 9-19 18-19s19 6 19 19zM1174.500 439v27M1155 466.500h38M1266 467l15.500-28M1278 467l14-28"/>
       <path d="M1332 452.500h33M1365 452.500l24 182.500M1365 452.500l140 247"/>
       <path d="M1385 618l4 17 2-18z"/>
      </g>
      <!-- black FCFs -->
      <g stroke="#000">
       <rect x="1693.500" y="307.500" width="230" height="36"/>
       <path d="M1730.500 307v37M1840.500 307v37M1873.500 307v37"/>
       <circle cx="1711" cy="325" r="9"/><path d="M1711 312v26M1699 325h24"/>
       <ellipse cx="1749" cy="325" rx="7" ry="10"/><path d="M1743 340l12-30"/>
       <circle cx="1810" cy="325" r="15"/>
       <path d="M1744.500 459.500h108.500v36.500h-108.500zM1788.500 459v37M1823.500 459v37"/>
       <path d="M1765.500 464v27M1747 491.500h37"/>
       <path d="M1744 477.500h-33l5 166.500M1713 628l3 16 3-16z"/>
       <path d="M1084 629.500h35l128 68.500"/>
       <path d="M1231 686l15 12-11-15z" />
      </g>
      <g fill="#000" stroke="#000" stroke-width=".4">
       <text x="1758" y="334" font-size="26">.25</text>
       <text class="dj" x="1810" y="332" font-size="18" font-weight="700" text-anchor="middle">M</text>
       <text x="1857" y="334" font-size="26" text-anchor="middle">A</text>
       <text x="1888" y="334" font-size="26" text-anchor="middle">B</text>
       <text x="1805" y="486" font-size="26" text-anchor="middle">.1</text>
       <text x="1838" y="486" font-size="26" text-anchor="middle">B</text>
       <text class="dj" x="1874" y="457" font-size="24" font-weight="700">H</text>
       <text class="dj" x="1060" y="639" font-size="27" font-weight="700">G</text>
      </g>
      <path d="M1896 449h4" stroke="#000"/>
      <!-- curves -->
      <g stroke="#000">
       <path d="M1247 698C1294 676 1342 654 1389 635C1436 616 1483 599 1530 584.500C1591 566 1652 548 1713 538C1775 527.500 1836 521 1899 518.500"/>
       <path d="M1295.500 676l10 17" stroke="#777"/>
       <path d="M1306 696c14-6 38-8 52-7c25 2 50 6 67 10"/>
       <path d="M1594 699C1605 660 1620 630 1634 606C1645 590 1655 580 1667 574C1685 555 1700 550 1713 546C1745 533 1775 530 1804 533C1835 537 1870 545 1899 566"/>
       <path d="M1624 678L1879 588C1888 588 1895 595 1899 606M1624 678C1616 684 1618 692 1624 699"/>
       <circle cx="1868" cy="628" r="20"/>
       <path d="M1856 606l24 44M1846 640l45-24" stroke="#333"/>
       <path d="M1708 699C1725 665 1755 646 1790 646C1825 646 1855 665 1869 699"/>
       <path d="M1724 699C1738 672 1760 654 1790 654C1820 654 1843 672 1854 699"/>
       <path d="M1759 653l17 46"/>
       <path d="M1640 699c4-14 12-20 20-20c8 0 14 8 16 20"/>
       <path d="M1655 670l3 29M1645 695l35-8" stroke="#444"/>
      </g>
      <path d="M1878 588l21-9" stroke="#999"/>
     </g>
    </svg>
   </div>
   <div class="tm-h d-flex">
    <div class="hdr tm-hb">Menedżer tabel</div>
    <div class="tm-pin d-flex justify-content-center"><svg width="14" height="20"><use href="#pin"/></svg></div>
   </div>
   <ul class="nav nav-tabs tt">
    <li class="nav-item"><a class="nav-link l1" href="#">Lista materiałów</a></li>
    <li class="nav-item"><a class="nav-link l2" href="#">Specyfikacje</a></li>
    <li class="nav-item"><a class="nav-link l3 active" href="#">Cechy charakterystyczne</a></li>
   </ul>
   <div class="tpn d-flex">
    <div class="tpc d-flex flex-column">
     <div class="drag d-flex align-items-center">Drag a column header here to group by that column
      <svg class="dragi" width="26" height="27" viewBox="0 0 26 27"><rect x="1" y="1" width="24" height="25" rx="2" fill="#777"/><rect x="7" y="7" width="12" height="13" fill="#999" stroke="#ccc"/><path d="M10 11h6l-3 5z" fill="#666"/><path d="M6 1v2M20 1v2M6 24v2M20 24v2" stroke="#ddd"/></svg>
     </div>
     <div class="tgw">
      <table class="table tg">
       <colgroup><col class="c0"><col class="c1"><col class="c2"><col class="c3"><col class="c4"><col class="c5"><col class="c6"><col class="c7"><col class="c8"><col class="c9"><col class="c10"><col class="c11"><col class="c12"></colgroup>
       <thead><tr>
        <th scope="col"><svg width="14" height="13" viewBox="0 0 14 13" class="mx-auto"><path d="M0 1.500h14M0 5h14M0 8h14M0 11.500h14" stroke="#555" stroke-width="1.500"/></svg></th>
        <th scope="col">#ID</th><th scope="col">#Char</th><th scope="col">Typ</th><th scope="col">Podtyp</th><th scope="col">Wartość</th><th scope="col">Jednostka</th><th scope="col">Tolerancja plus</th><th scope="col">Tolerancja min...</th><th scope="col">Górna granica</th><th scope="col">Dolna granica</th><th scope="col">Arkusz/widok/przechwyt...</th><th scope="col">Operacja</th>
       </tr></thead>
       <tbody>
        <tr class="sel"><td class="rh"><svg width="6" height="12" viewBox="0 0 6 12" class="mx-auto"><path d="M1 1l4 5-4 5" fill="none" stroke="#666" stroke-width="1.300"/></svg></td><td>1</td><td>1</td><td class="tp">Tolerancja położer</td><td class="tp">Profil powierzchni</td><td><span class="gd"><span><svg width="15" height="8" viewBox="0 0 15 8"><path d="M.5 7.500C.5 3 4 .5 7.500 .5s7 2.500 7 7z" fill="none" stroke="#555"/></svg></span><span>0,2</span><span>B</span><span>C</span></span></td><td class="tp">mm</td><td>+0,02</td><td>-0,05</td><td>0,09</td><td>0,1</td><td>Sheet1</td><td class="tp">Cięcie</td></tr>
        <tr><td class="rh"></td><td>2</td><td>2</td><td class="tp">Tolerancja położer</td><td class="tp">Pozycja</td><td><span class="gd"><span><svg width="8" height="10" viewBox="0 0 8 10"><ellipse cx="4" cy="5" rx="3" ry="3.500" fill="none" stroke="#555"/><path d="M4 0v10" stroke="#555"/></svg></span><span>,25</span><span><svg width="9" height="9" viewBox="0 0 9 9"><circle cx="4.500" cy="4.500" r="4" fill="none" stroke="#555"/><text x="4.500" y="7" font-size="6.500" text-anchor="middle" fill="#555" font-family="Liberation Sans">M</text></svg></span><span>A</span><span>B</span><span>C</span></span></td><td class="tp">mm</td><td></td><td></td><td>0</td><td></td><td>Sheet1</td><td></td></tr>
        <tr><td class="rh"></td><td>3</td><td>3</td><td class="tp">Wymiar</td><td class="tp">Średnica</td><td>3x Ø11,00 0,50/-0,10 THRU</td><td class="tp">mm</td><td>+0,50</td><td>-0,10</td><td>11,50</td><td>10,90</td><td>Sheet1</td><td></td></tr>
        <tr><td class="rh"></td><td>4</td><td>4</td><td class="tp">Inne</td><td class="tp">Baza pomiarowa</td><td>E</td><td class="tp">mm</td><td></td><td></td><td></td><td></td><td>Sheet1</td><td></td></tr>
       </tbody>
      </table>
     </div>
     <div class="hsb"><div class="hsb-t"><div class="hsb-a"><svg width="5" height="8" viewBox="0 0 5 8" class="mx-auto"><path d="M4.500 0v8L0 4z" fill="#808080"/></svg></div></div><div class="hsb-r d-flex justify-content-center align-items-center"><svg width="5" height="8" viewBox="0 0 5 8"><path d="M.5 0v8L5 4z" fill="#808080"/></svg></div></div>
     <div class="fz"></div>
    </div>
    <div class="vsb"><i><span class="cu"></span></i><i><span class="cd"></span></i></div>
   </div>
  </div>
  <div class="vt3">3DExperience Connector</div>
 </div>
</div>

<div class="stb d-flex align-items-center">
 <svg width="11" height="14" viewBox="0 0 11 14"><rect width="2.500" height="14" fill="#c9d6cf"/><path d="M11 0v14L3.500 7z" fill="#c9d6cf"/></svg>
 <svg class="m1" width="9" height="14" viewBox="0 0 9 14"><path d="M9 0v14L0 7z" fill="#c9d6cf"/></svg>
 <div class="stin m2"></div>
 <span class="m3 st-txt">/</span>
 <svg class="m4" width="8" height="14" viewBox="0 0 8 14"><path d="M0 0v14l8-7z" fill="#c9d6cf"/></svg>
 <svg class="m5" width="11" height="14" viewBox="0 0 11 14"><path d="M0 0v14l7.500-7z" fill="#c9d6cf"/><rect x="8.500" width="2.500" height="14" fill="#c9d6cf"/></svg>
 <svg class="m6" width="15" height="15" viewBox="0 0 15 15"><rect x=".5" y=".5" width="14" height="14" fill="#dfe6e2" stroke="#c9d6cf"/><rect x="4.500" y="4.500" width="6" height="6" fill="#fff" stroke="#6e8a7b"/><path d="M7.500 1v3M7.500 11v3M1 7.500h3M11 7.500h3" stroke="#6e8a7b"/></svg>
 <span class="st-txt m7">0.00</span>
 <span class="st-txt m8">%</span>
 <svg class="m9" width="18" height="20" viewBox="0 0 18 20"><ellipse cx="9" cy="10" rx="8.500" ry="9.500" fill="#e6ecea"/><rect x="3" y="8" width="12" height="4" fill="#a3a3a3"/></svg>
 <div class="zs"><i></i></div>
 <svg class="m10" width="17" height="20" viewBox="0 0 17 20"><ellipse cx="8.500" cy="10" rx="8" ry="9.500" fill="#e6ecea"/><path d="M6 3h5v5h5v4h-5v5H6v-5H1V8h5z" fill="#a3a3a3"/></svg>
</div>
</div>
</body>
</html>
